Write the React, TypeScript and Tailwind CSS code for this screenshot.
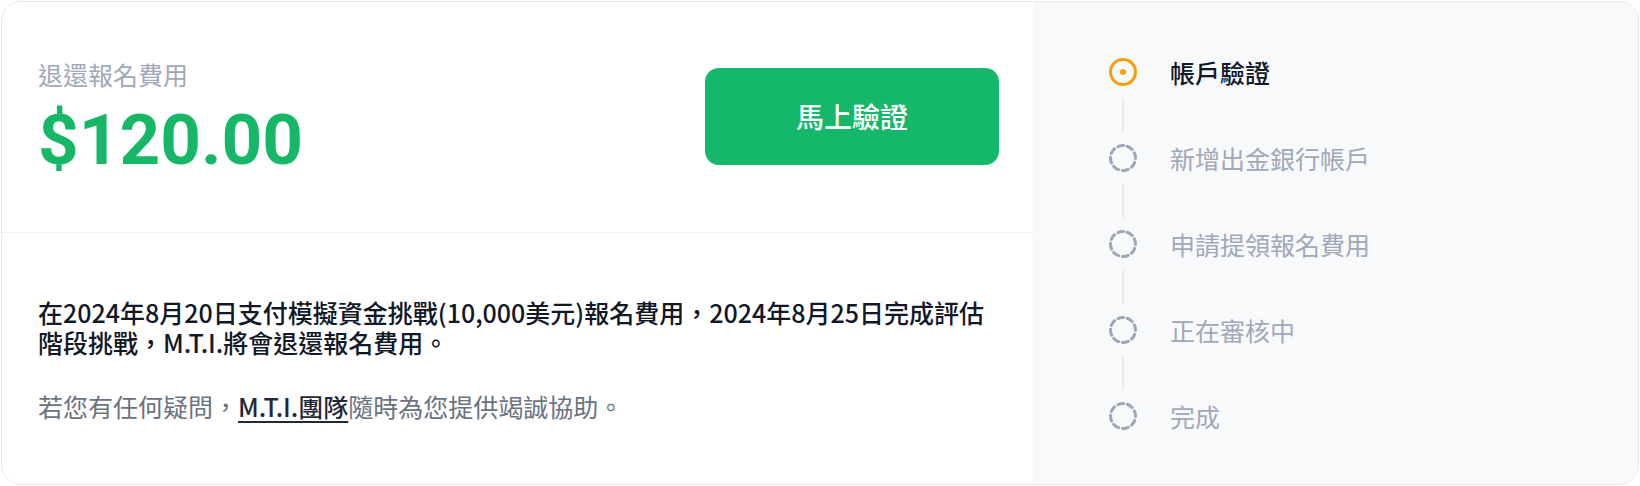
import React from "react";

const steps = [
  { label: "帳戶驗證", active: true },
  { label: "新增出金銀行帳戶", active: false },
  { label: "申請提領報名費用", active: false },
  { label: "正在審核中", active: false },
  { label: "完成", active: false },
];

const StepIcon: React.FC<{ active: boolean }> = ({ active }) =>
  active ? (
    <svg width="28" height="28" viewBox="0 0 28 28" className="shrink-0">
      <circle cx="14" cy="14" r="12.5" fill="none" stroke="#f5a00b" strokeWidth="3" />
      <circle cx="14" cy="14" r="3" fill="#f5a00b" />
    </svg>
  ) : (
    <svg width="28" height="28" viewBox="0 0 28 28" className="shrink-0">
      <circle
        cx="14"
        cy="14"
        r="12.5"
        fill="none"
        stroke="#9ea6b7"
        strokeWidth="3"
        strokeDasharray="5.8 4"
        strokeLinecap="round"
        transform="rotate(-70 14 14)"
      />
    </svg>
  );

export default function App() {
  return (
    <div className="w-[1640px] h-[486px] p-px bg-white font-['Noto_Sans_CJK_TC','Noto_Sans',sans-serif]">
      <div className="flex h-full rounded-[20px] border border-[#e6e8ec] overflow-hidden">
        {/* Left side */}
        <div className="w-[1031px] flex flex-col bg-white">
          <div className="h-[231px] flex items-center justify-between pl-9 pr-[34px] pb-[2px] border-b border-[#eef0f3]">
            <div className="flex flex-col">
              <span className="text-[25px] leading-[32px] text-[#a0a8b9]">退還報名費用</span>
              <span className="mt-[14px] text-[71px] leading-none font-bold text-[#16b868] font-['Roboto',sans-serif]">
                $120.00
              </span>
            </div>
            <button className="w-[294px] h-[97px] rounded-[14px] bg-[#15b86a] text-white text-[28px] font-medium">
              馬上驗證
            </button>
          </div>

          <div className="flex-1 flex flex-col justify-center pl-9 pr-[34px]">
            <p className="text-[25px] leading-[30px] text-[#111827] font-medium">
              在2024年8月20日支付模擬資金挑戰(10,000美元)報名費用，2024年8月25日完成評估階段挑戰，M.T.I.將會退還報名費用。
            </p>
            <p className="mt-[34px] text-[25px] leading-[30px] text-[#6b7280]">
              若您有任何疑問，
              <span className="text-[#1f2937] font-medium underline underline-offset-4">M.T.I.團隊</span>
              隨時為您提供竭誠協助。
            </p>
          </div>
        </div>

        {/* Right side: steps */}
        <div className="flex-1 bg-[#f8f9fb] pl-[76px] pt-[56px]">
          {steps.map((s, i) => (
            <div key={s.label}>
              <div className="flex items-center gap-[33px] h-[28px]">
                <StepIcon active={s.active} />
                <span
                  className={`text-[25px] leading-none ${
                    s.active ? "text-[#111827] font-medium" : "text-[#a0a8b9]"
                  }`}
                >
                  {s.label}
                </span>
              </div>
              {i < steps.length - 1 && <div className="ml-[13px] w-[2px] h-[34px] my-3 bg-[#e8eaee]" />}
            </div>
          ))}
        </div>
      </div>
    </div>
  );
}
